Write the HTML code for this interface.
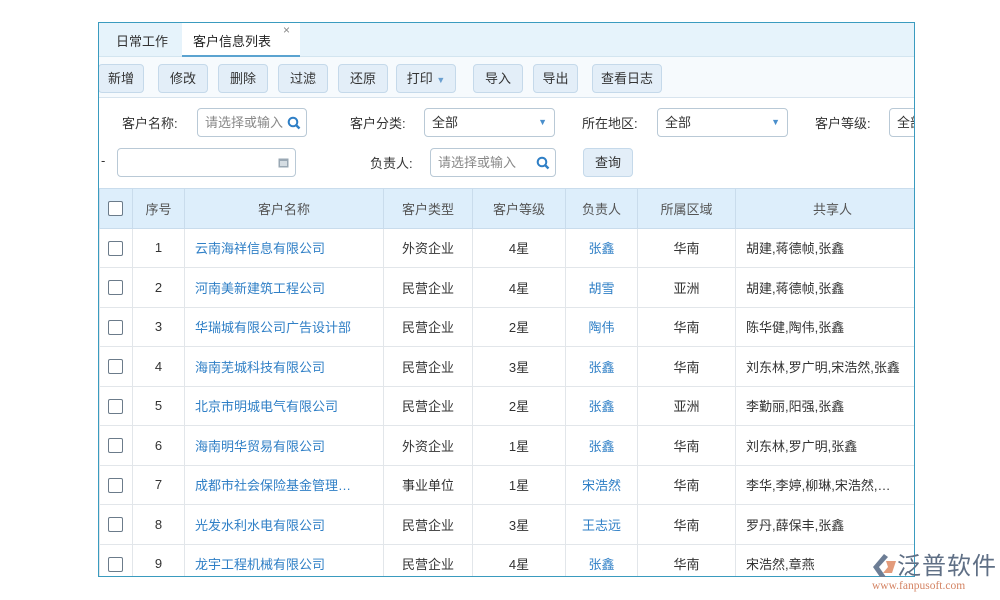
<!DOCTYPE html><html><head><meta charset="utf-8"><style>
*{margin:0;padding:0;box-sizing:border-box}
body{width:1000px;height:600px;background:#fff;position:relative;overflow:hidden;font-family:"Liberation Sans","Noto Sans CJK SC",sans-serif;font-size:13px;color:#333}
.a{position:absolute}
#box{left:98px;top:22px;width:817px;height:555px;border:1px solid #3a9bbf;overflow:hidden;background:#fff}
.btn{position:absolute;top:41px;height:29px;border:1px solid #c5d9ea;border-radius:4px;background:#e3eef8;font-size:13px;color:#333;text-align:center;line-height:27px}
.inp{position:absolute;height:29px;border:1px solid #b9c9d6;border-radius:4px;background:#fff;line-height:27px;padding-left:7px;font-size:13px}
.ph{color:#888}
.lbl{position:absolute;font-size:13px;color:#333}
.cb{position:absolute;left:8px;width:15px;height:15px;border:1px solid #6b7b8a;border-radius:2px;background:#fff}
table{position:absolute;left:0;top:165px;border-collapse:collapse;table-layout:fixed;width:830px}
td,th{border:1px solid #e2e6ea;height:39.5px;text-align:center;font-weight:normal;font-size:13px;white-space:nowrap;overflow:hidden}
th{background:#ddeefb;color:#555;border-color:#c9dcec}
td.l{text-align:left;padding-left:10px}
.b{color:#2f7fc6}
.mg{position:absolute;right:5px;top:7px}
</style></head><body>
<div id="box" class="a">
<div class="a" style="left:0;top:0;width:817px;height:34px;background:#e6f3fb;border-bottom:1px solid #d3e5f0"></div>
<div class="lbl" style="left:17px;top:8px">日常工作</div>
<div class="a" style="left:83px;top:0;width:118px;height:34px;background:#fff;border-bottom:2px solid #5ba3d0"></div>
<div class="lbl" style="left:94px;top:8px;color:#222">客户信息列表</div>
<div class="lbl" style="left:184px;top:0;color:#888;font-size:12px">×</div>
<div class="a" style="left:0;top:34px;width:817px;height:41px;background:#f6fafd;border-bottom:1px solid #d8e4ee"></div>
<div class="btn" style="left:-1px;width:46px">新增</div>
<div class="btn" style="left:59px;width:50px">修改</div>
<div class="btn" style="left:119px;width:50px">删除</div>
<div class="btn" style="left:179px;width:50px">过滤</div>
<div class="btn" style="left:239px;width:50px">还原</div>
<div class="btn" style="left:297px;width:60px">打印 <span style="color:#6a9fd0;font-size:9px">▼</span></div>
<div class="btn" style="left:374px;width:50px">导入</div>
<div class="btn" style="left:434px;width:45px">导出</div>
<div class="btn" style="left:493px;width:70px">查看日志</div>
<div class="lbl" style="left:23px;top:90px">客户名称:</div>
<div class="inp ph" style="left:98px;top:85px;width:110px">请选择或输入<svg class="mg" width="14" height="14" viewBox="0 0 14 14"><circle cx="6" cy="6" r="4.3" fill="none" stroke="#2f7fc6" stroke-width="2"/><path d="M9 9L12.5 12.5" stroke="#2f7fc6" stroke-width="2.4"/></svg></div>
<div class="lbl" style="left:251px;top:90px">客户分类:</div>
<div class="inp" style="left:325px;top:85px;width:131px">全部<span style="position:absolute;right:7px;color:#4a8fcc;font-size:9px">▼</span></div>
<div class="lbl" style="left:483px;top:90px">所在地区:</div>
<div class="inp" style="left:558px;top:85px;width:131px">全部<span style="position:absolute;right:7px;color:#4a8fcc;font-size:9px">▼</span></div>
<div class="lbl" style="left:716px;top:90px">客户等级:</div>
<div class="inp" style="left:790px;top:85px;width:60px">全部</div>
<div class="lbl" style="left:2px;top:130px">-</div>
<div class="inp" style="left:18px;top:125px;width:179px"><svg style="position:absolute;right:6px;top:8px" width="11" height="11" viewBox="0 0 11 11"><rect x="0.5" y="1.5" width="10" height="9" fill="#9aa8b4"/><rect x="2" y="4" width="7" height="5" fill="#d5dde3"/></svg></div>
<div class="lbl" style="left:271px;top:130px">负责人:</div>
<div class="inp ph" style="left:331px;top:125px;width:126px">请选择或输入<svg class="mg" width="14" height="14" viewBox="0 0 14 14"><circle cx="6" cy="6" r="4.3" fill="none" stroke="#2f7fc6" stroke-width="2"/><path d="M9 9L12.5 12.5" stroke="#2f7fc6" stroke-width="2.4"/></svg></div>
<div class="btn" style="left:484px;top:125px;width:50px">查询</div>
<table>
<colgroup><col style="width:33px"><col style="width:52px"><col style="width:199px"><col style="width:89px"><col style="width:93px"><col style="width:72px"><col style="width:98px"><col style="width:194px"></colgroup>
<tr><th style="position:relative"><span class="cb" style="top:12px"></span></th><th>序号</th><th>客户名称</th><th>客户类型</th><th>客户等级</th><th>负责人</th><th>所属区域</th><th>共享人</th></tr>
<tr><td style="position:relative"><span class="cb" style="top:12px"></span></td><td>1</td><td class="l b">云南海祥信息有限公司</td><td>外资企业</td><td>4星</td><td class="b">张鑫</td><td>华南</td><td class="l">胡建,蒋德帧,张鑫</td></tr>
<tr><td style="position:relative"><span class="cb" style="top:12px"></span></td><td>2</td><td class="l b">河南美新建筑工程公司</td><td>民营企业</td><td>4星</td><td class="b">胡雪</td><td>亚洲</td><td class="l">胡建,蒋德帧,张鑫</td></tr>
<tr><td style="position:relative"><span class="cb" style="top:12px"></span></td><td>3</td><td class="l b">华瑞城有限公司广告设计部</td><td>民营企业</td><td>2星</td><td class="b">陶伟</td><td>华南</td><td class="l">陈华健,陶伟,张鑫</td></tr>
<tr><td style="position:relative"><span class="cb" style="top:12px"></span></td><td>4</td><td class="l b">海南芜城科技有限公司</td><td>民营企业</td><td>3星</td><td class="b">张鑫</td><td>华南</td><td class="l">刘东林,罗广明,宋浩然,张鑫</td></tr>
<tr><td style="position:relative"><span class="cb" style="top:12px"></span></td><td>5</td><td class="l b">北京市明城电气有限公司</td><td>民营企业</td><td>2星</td><td class="b">张鑫</td><td>亚洲</td><td class="l">李勤丽,阳强,张鑫</td></tr>
<tr><td style="position:relative"><span class="cb" style="top:12px"></span></td><td>6</td><td class="l b">海南明华贸易有限公司</td><td>外资企业</td><td>1星</td><td class="b">张鑫</td><td>华南</td><td class="l">刘东林,罗广明,张鑫</td></tr>
<tr><td style="position:relative"><span class="cb" style="top:12px"></span></td><td>7</td><td class="l b">成都市社会保险基金管理…</td><td>事业单位</td><td>1星</td><td class="b">宋浩然</td><td>华南</td><td class="l">李华,李婷,柳琳,宋浩然,…</td></tr>
<tr><td style="position:relative"><span class="cb" style="top:12px"></span></td><td>8</td><td class="l b">光发水利水电有限公司</td><td>民营企业</td><td>3星</td><td class="b">王志远</td><td>华南</td><td class="l">罗丹,薛保丰,张鑫</td></tr>
<tr><td style="position:relative"><span class="cb" style="top:12px"></span></td><td>9</td><td class="l b">龙宇工程机械有限公司</td><td>民营企业</td><td>4星</td><td class="b">张鑫</td><td>华南</td><td class="l">宋浩然,章燕</td></tr>
</table>
</div>
<svg class="a" style="left:870px;top:553px" width="28" height="26" viewBox="0 0 28 26"><path d="M14 1 L3 14 L10 24 L16 24 L9 14 L18 4Z" fill="#6c7d95"/><path d="M16 8 L26 8 L22 20 L13 20 L18 14Z" fill="#e39b7b"/></svg>
<div class="a" style="left:897px;top:549px;font-size:24px;color:#5f6f85;letter-spacing:1px;font-family:'Noto Sans CJK SC',sans-serif;line-height:30px">泛普软件</div>
<div class="a" style="left:872px;top:580px;font-size:11.5px;color:#d48464;font-family:'Liberation Serif',serif">www.fanpusoft.com</div>
</body></html>
